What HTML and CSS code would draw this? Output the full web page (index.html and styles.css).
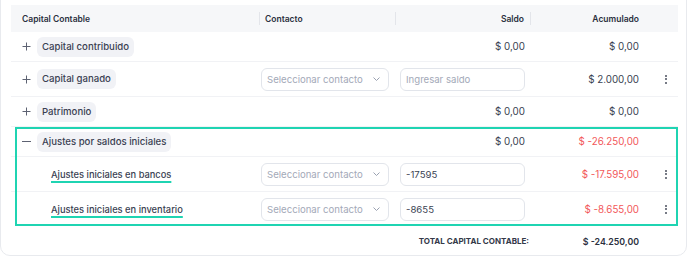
FILE: index.html
```html
<!DOCTYPE html>
<html lang="es">
<head>
    <meta charset="UTF-8">
    <title>Capital Contable</title>
    <link rel="stylesheet" href="styles.css">
</head>
<body>
    <div class="card">
        <div class="row head">
            <div class="cell first">Capital Contable</div>
            <div class="cell sep">Contacto</div>
            <div class="cell sep num">Saldo</div>
            <div class="cell sep num">Acumulado</div>
            <div class="cell"></div>
        </div>

        <div class="row r-short">
            <div class="cell first"><svg class="toggle" width="9" height="9" viewBox="0 0 9 9"><path d="M4.5 0.5v8M0.5 4.5h8" stroke="#5d6272" stroke-width="1"/></svg><span class="badge">Capital contribuido</span></div>
            <div class="cell"></div>
            <div class="cell num">$ 0,00</div>
            <div class="cell num">$ 0,00</div>
            <div class="cell"></div>
        </div>

        <div class="row r-tall">
            <div class="cell first"><svg class="toggle" width="9" height="9" viewBox="0 0 9 9"><path d="M4.5 0.5v8M0.5 4.5h8" stroke="#5d6272" stroke-width="1"/></svg><span class="badge">Capital ganado</span></div>
            <div class="cell"><div class="select"><span>Seleccionar contacto</span><svg width="9" height="6" viewBox="0 0 9 6"><path d="M1.5 1.5l3 3 3-3" fill="none" stroke="#9aa1b1" stroke-width="1"/></svg></div></div>
            <div class="cell"><div class="input placeholder">Ingresar saldo</div></div>
            <div class="cell num">$ 2.000,00</div>
            <div class="cell menu"><span class="dots"><i></i><i></i><i></i></span></div>
        </div>

        <div class="row r-short">
            <div class="cell first"><svg class="toggle" width="9" height="9" viewBox="0 0 9 9"><path d="M4.5 0.5v8M0.5 4.5h8" stroke="#5d6272" stroke-width="1"/></svg><span class="badge">Patrimonio</span></div>
            <div class="cell"></div>
            <div class="cell num">$ 0,00</div>
            <div class="cell num">$ 0,00</div>
            <div class="cell"></div>
        </div>

        <div class="group">
            <div class="row r-short">
                <div class="cell first"><svg class="toggle" width="9" height="9" viewBox="0 0 9 9"><path d="M0 4.5h9" stroke="#5d6272" stroke-width="1"/></svg><span class="badge">Ajustes por saldos iniciales</span></div>
                <div class="cell"></div>
                <div class="cell num">$ 0,00</div>
                <div class="cell num neg">$ -26.250,00</div>
                <div class="cell"></div>
            </div>
            <div class="row r-tall">
                <div class="cell first sub"><span class="link">Ajustes iniciales en bancos</span></div>
                <div class="cell"><div class="select"><span>Seleccionar contacto</span><svg width="9" height="6" viewBox="0 0 9 6"><path d="M1.5 1.5l3 3 3-3" fill="none" stroke="#9aa1b1" stroke-width="1"/></svg></div></div>
                <div class="cell"><div class="input">-17595</div></div>
                <div class="cell num neg">$ -17.595,00</div>
                <div class="cell menu"><span class="dots"><i></i><i></i><i></i></span></div>
            </div>
            <div class="row r-tall last">
                <div class="cell first sub"><span class="link">Ajustes iniciales en inventario</span></div>
                <div class="cell"><div class="select"><span>Seleccionar contacto</span><svg width="9" height="6" viewBox="0 0 9 6"><path d="M1.5 1.5l3 3 3-3" fill="none" stroke="#9aa1b1" stroke-width="1"/></svg></div></div>
                <div class="cell"><div class="input">-8655</div></div>
                <div class="cell num neg">$ -8.655,00</div>
                <div class="cell menu"><span class="dots"><i></i><i></i><i></i></span></div>
            </div>
        </div>

        <div class="row total">
            <div class="cell first"></div>
            <div class="cell"></div>
            <div class="cell num total-label">TOTAL CAPITAL CONTABLE:</div>
            <div class="cell num total-value">$ -24.250,00</div>
            <div class="cell"></div>
        </div>
    </div>
</body>
</html>
```

FILE: styles.css
```css
body {
    margin: 0;
    background: #ffffff;
    font-family: Inter, 'Noto Sans', Arial, sans-serif;
    color: #3a3f52;
}
.card {
    width: 667px;
    margin-top: -10px;
    padding: 14px 8px 0 10px;
    height: 250px;
    border: 1px solid #e8eaee;
    border-radius: 10px;
    background: #ffffff;
}
.row {
    display: grid;
    grid-template-columns: 248px 136px 135px 116px 32px;
    align-items: center;
    border-bottom: 1px solid #f1f2f5;
    font-size: 9.8px;
}
.cell {
    display: flex;
    align-items: center;
    height: 100%;
    box-sizing: border-box;
}
.num {
    justify-content: flex-end;
    padding-right: 5px;
}
.row > .cell:nth-child(4).num { padding-right: 7px; }
.head {
    height: 27px;
    background: #f6f7f9;
    border-bottom: none;
    font-size: 8.5px;
    font-weight: 600;
    color: #2b3040;
}
.head .first { padding-left: 11px; }
.head .sep { position: relative; padding-left: 6px; }
.head .sep::before {
    content: "";
    position: absolute;
    left: 0;
    top: 7px;
    height: 13px;
    border-left: 1px solid #e3e5ea;
}
.head .num { padding-right: 6px; }
.r-short { height: 29px; }
.r-tall { height: 34px; }
.first { padding-left: 11px; }
.toggle {
    margin-right: 6px;
    flex: none;
}
.badge {
    background: #f1f2f6;
    border-radius: 6px;
    padding: 0 5px;
    height: 20px;
    line-height: 20px;
    font-size: 9.6px;
    font-weight: 500;
    color: #3a3f52;
}
.sub { padding-left: 40px; }
.link {
    font-size: 9.3px;
    font-weight: 500;
    color: #3a3f52;
    text-decoration: underline;
    text-decoration-color: #1fd4b2;
    text-decoration-thickness: 2px;
    text-underline-offset: 3px;
}
.select, .input {
    box-sizing: border-box;
    height: 23px;
    border: 1px solid #e2e5eb;
    border-radius: 6px;
    display: flex;
    align-items: center;
    font-size: 9.6px;
}
.select {
    width: 128px;
    margin-left: 2px;
    padding: 0 7px 0 5px;
    justify-content: space-between;
    color: #a3a9b8;
}
.input {
    width: 125px;
    margin-left: 5px;
    padding-left: 5px;
    color: #3a3f52;
}
.input.placeholder { color: #a3a9b8; }
.neg { color: #f2585a; }
.menu { justify-content: center; padding-left: 8px; }
.dots {
    display: flex;
    flex-direction: column;
    gap: 1.5px;
}
.dots i {
    width: 2px;
    height: 2px;
    background: #4a4f5e;
    border-radius: 1px;
}
.group { position: relative; }
.group::after {
    content: "";
    position: absolute;
    top: 0;
    left: 4px;
    right: 0;
    bottom: 0;
    border: 2px solid #1fd4b2;
    pointer-events: none;
}
.row.last { border-bottom: none; }
.total { height: 30px; border-bottom: none; }
.total-label {
    font-size: 8px;
    font-weight: 700;
    color: #343949;
    padding-right: 1px;
    white-space: nowrap;
}
.row > .total-value {
    font-size: 8.8px;
    font-weight: 600;
    color: #2b3040;
}
```
